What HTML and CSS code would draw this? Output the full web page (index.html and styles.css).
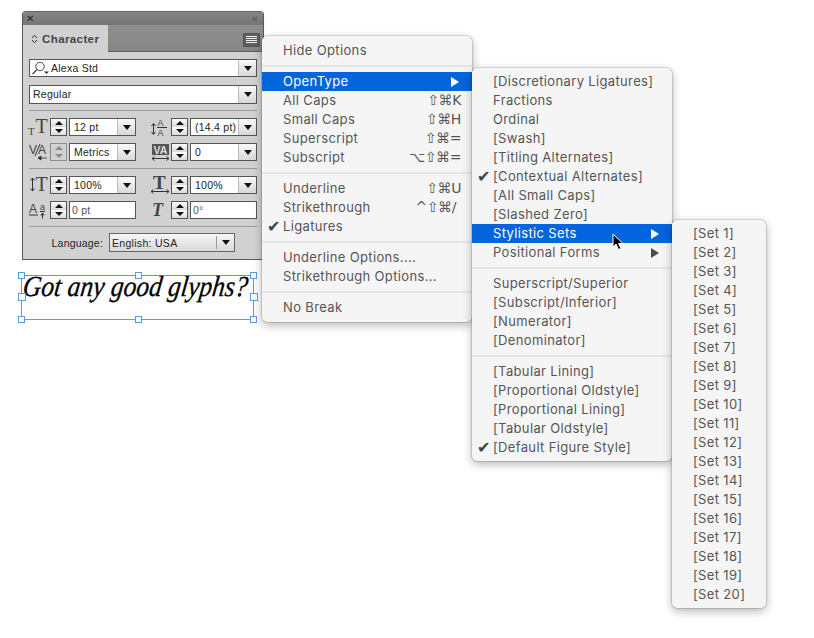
FILE: index.html
```html
<!DOCTYPE html>
<html lang="en">
<head>
<meta charset="utf-8">
<title>Character panel</title>
<link rel="stylesheet" href="styles.css">
</head>
<body>
<div class="canvas">
  <section class="panel">
    <div class="titlebar"><span class="close">✕</span><span class="collapse">‹‹</span></div>
    <div class="tabrow">
      <div class="tab"><svg class="updown" width="7" height="10" viewBox="0 0 7 10"><path d="M1 4 3.500 1.200 6 4M1 6l2.500 2.800L6 6" fill="none" stroke="#333" stroke-width="1"/></svg>Character</div>
      <div class="menubtn"><i></i><i></i><i></i><i></i></div>
    </div>
    <div class="body">
      <div class="combo wide">
        <svg class="search" width="20" height="14" viewBox="0 0 20 14"><circle cx="9" cy="5.500" r="4.200" fill="none" stroke="#444"/><path d="M6 8.500 1.500 13" stroke="#444" stroke-width="1.200"/><path d="M13 10.500h5l-2.500 2.500z" fill="#333"/></svg>
        <span class="val">Alexa Std</span><span class="arrowbtn"><b></b></span>
      </div>
      <div class="combo wide second"><span class="val pad">Regular</span><span class="arrowbtn"><b></b></span></div>
      <hr class="rule first">
      <div class="fields">
        <div class="field">
          <svg class="ico" width="21" height="18" viewBox="0 0 21 18"><text x="-1" y="16.500" class="g s11">T</text><text x="6.500" y="15" class="g s20">T</text></svg>
          <div class="stepper"><span class="up"></span><span class="dn"></span></div>
          <div class="combo"><span class="val">12 pt</span><span class="arrowbtn"><b></b></span></div>
        </div>
        <div class="field">
          <svg class="ico" width="21" height="18" viewBox="0 0 21 18"><text x="7.500" y="8" class="g2 s9">A</text><text x="7.500" y="17.500" class="g2 s9">A</text><path d="M3.500 6v10M1.500 8l2-2.500 2 2.500M1.500 14l2 2.500 2-2.500" fill="none" stroke="#333"/><path d="M7 9.500h10" stroke="#333"/></svg>
          <div class="stepper"><span class="up"></span><span class="dn"></span></div>
          <div class="combo"><span class="val">(14.4 pt)</span><span class="arrowbtn"><b></b></span></div>
        </div>
        <div class="field">
          <svg class="ico" width="21" height="18" viewBox="0 0 21 18"><text x="0" y="11" class="g2 s12">V</text><text x="9" y="11" class="g2 s12">A</text><path d="M6 13 11 1" stroke="#333"/><path d="M9 15h9M12 13l-3 2 3 2z" fill="#333" stroke="#333" stroke-width=".8"/></svg>
          <div class="stepper off"><span class="up"></span><span class="dn"></span></div>
          <div class="combo"><span class="val">Metrics</span><span class="arrowbtn"><b></b></span></div>
        </div>
        <div class="field">
          <svg class="ico" width="21" height="18" viewBox="0 0 21 18"><rect x="2" y="1" width="17" height="11" fill="#555"/><text x="3.500" y="10.500" class="g3">VA</text><path d="M2 15.500h17M4.500 13.500l-2.500 2 2.500 2M16.500 13.500l2.500 2-2.500 2" fill="none" stroke="#333"/></svg>
          <div class="stepper"><span class="up"></span><span class="dn"></span></div>
          <div class="combo"><span class="val">0</span><span class="arrowbtn"><b></b></span></div>
        </div>
      </div>
      <hr class="rule">
      <div class="fields">
        <div class="field">
          <svg class="ico" width="21" height="18" viewBox="0 0 21 18"><path d="M3.500 2v13M1.500 4.500l2-2.500 2 2.500M1.500 12.500l2 2.500 2-2.500" fill="none" stroke="#333"/><text x="6.500" y="15" class="g s20">T</text></svg>
          <div class="stepper"><span class="up"></span><span class="dn"></span></div>
          <div class="combo"><span class="val">100%</span><span class="arrowbtn"><b></b></span></div>
        </div>
        <div class="field">
          <svg class="ico" width="21" height="18" viewBox="0 0 21 18"><text x="3" y="13" class="g b s19">T</text><path d="M1 15.500h18M3.500 13.500l-2.500 2 2.500 2M16.500 13.500l2.500 2-2.500 2" fill="none" stroke="#333"/></svg>
          <div class="stepper"><span class="up"></span><span class="dn"></span></div>
          <div class="combo"><span class="val">100%</span><span class="arrowbtn"><b></b></span></div>
        </div>
        <div class="field">
          <svg class="ico" width="21" height="18" viewBox="0 0 21 18"><text x="0" y="12" class="g2 s12">A</text><text x="11" y="8.500" class="g2 s9">a</text><path d="M0 14h9M11 10.500h5" stroke="#333"/><path d="M13.500 17.500v-5M11.800 14.500l1.700-2.500 1.700 2.500" fill="none" stroke="#333"/></svg>
          <div class="stepper"><span class="up"></span><span class="dn"></span></div>
          <div class="input"><span class="val dim">0 pt</span></div>
        </div>
        <div class="field">
          <svg class="ico" width="21" height="18" viewBox="0 0 21 18"><text x="2" y="15" class="g it s18">T</text></svg>
          <div class="stepper"><span class="up"></span><span class="dn"></span></div>
          <div class="input"><span class="val dim">0°</span></div>
        </div>
      </div>
      <hr class="rule">
      <div class="lang">
        <span class="lang-label">Language:</span>
        <div class="lang-select"><span class="val">English: USA</span><span class="lang-arrow"><b></b></span></div>
      </div>
    </div>
  </section>

  <div class="frame">
    <span class="frame-text">Got any good glyphs?</span>
    <i class="h tl"></i><i class="h tc"></i><i class="h tr"></i>
    <i class="h ml big"></i><i class="h mr big"></i>
    <i class="h bl"></i><i class="h bc"></i><i class="h br"></i>
  </div>

  <div class="menu m1">
    <div class="row"><span>Hide Options</span></div>
    <div class="sep"></div>
    <div class="row hl"><span>OpenType</span><em class="tri"></em></div>
    <div class="row"><span>All Caps</span><kbd>⇧⌘K</kbd></div>
    <div class="row"><span>Small Caps</span><kbd>⇧⌘H</kbd></div>
    <div class="row"><span>Superscript</span><kbd>⇧⌘=</kbd></div>
    <div class="row"><span>Subscript</span><kbd>⌥⇧⌘=</kbd></div>
    <div class="sep"></div>
    <div class="row"><span>Underline</span><kbd>⇧⌘U</kbd></div>
    <div class="row"><span>Strikethrough</span><kbd class="k2">^⇧⌘/</kbd></div>
    <div class="row on"><span>Ligatures</span></div>
    <div class="sep"></div>
    <div class="row"><span>Underline Options....</span></div>
    <div class="row"><span>Strikethrough Options...</span></div>
    <div class="sep"></div>
    <div class="row"><span>No Break</span></div>
  </div>

  <div class="menu m2">
    <div class="row"><span>[Discretionary Ligatures]</span></div>
    <div class="row"><span>Fractions</span></div>
    <div class="row"><span>Ordinal</span></div>
    <div class="row"><span>[Swash]</span></div>
    <div class="row"><span>[Titling Alternates]</span></div>
    <div class="row on"><span>[Contextual Alternates]</span></div>
    <div class="row"><span>[All Small Caps]</span></div>
    <div class="row"><span>[Slashed Zero]</span></div>
    <div class="row hl"><span>Stylistic Sets</span><em class="tri"></em></div>
    <div class="row"><span>Positional Forms</span><em class="tri"></em></div>
    <div class="sep"></div>
    <div class="row"><span>Superscript/Superior</span></div>
    <div class="row"><span>[Subscript/Inferior]</span></div>
    <div class="row"><span>[Numerator]</span></div>
    <div class="row"><span>[Denominator]</span></div>
    <div class="sep"></div>
    <div class="row"><span>[Tabular Lining]</span></div>
    <div class="row"><span>[Proportional Oldstyle]</span></div>
    <div class="row"><span>[Proportional Lining]</span></div>
    <div class="row"><span>[Tabular Oldstyle]</span></div>
    <div class="row on"><span>[Default Figure Style]</span></div>
  </div>

  <div class="menu m3">
    <div class="row"><span>[Set 1]</span></div>
    <div class="row"><span>[Set 2]</span></div>
    <div class="row"><span>[Set 3]</span></div>
    <div class="row"><span>[Set 4]</span></div>
    <div class="row"><span>[Set 5]</span></div>
    <div class="row"><span>[Set 6]</span></div>
    <div class="row"><span>[Set 7]</span></div>
    <div class="row"><span>[Set 8]</span></div>
    <div class="row"><span>[Set 9]</span></div>
    <div class="row"><span>[Set 10]</span></div>
    <div class="row"><span>[Set 11]</span></div>
    <div class="row"><span>[Set 12]</span></div>
    <div class="row"><span>[Set 13]</span></div>
    <div class="row"><span>[Set 14]</span></div>
    <div class="row"><span>[Set 15]</span></div>
    <div class="row"><span>[Set 16]</span></div>
    <div class="row"><span>[Set 17]</span></div>
    <div class="row"><span>[Set 18]</span></div>
    <div class="row"><span>[Set 19]</span></div>
    <div class="row"><span>[Set 20]</span></div>
  </div>

  <svg class="cursor" width="12" height="18" viewBox="0 0 12 18"><path d="M1 1v13l3-3 2.500 5.500 2.500-1L6.500 10.500H11z" fill="#000" stroke="#fff" stroke-width="1"/></svg>
</div>
</body>
</html>
```

FILE: styles.css
```css
* { box-sizing: border-box; }
html, body { margin: 0; padding: 0; background: #fff; }
.canvas { position: relative; width: 814px; height: 638px; overflow: hidden; font-family: "Liberation Sans", Arial, sans-serif; }

/* Character panel */
.panel { position: absolute; left: 22px; top: 11px; width: 242px; height: 249px; background: #d1d1d1; border: 1px solid #5c5c5c; border-top-color: #666; border-radius: 4px 4px 0 0; box-shadow: 0 0 1px rgba(0,0,0,.2); color: #222; }
.titlebar { height: 13px; background: linear-gradient(#858585, #757575); display: flex; justify-content: space-between; align-items: center; padding: 0 6px 0 3px; border-radius: 3px 3px 0 0; color: #222; font-size: 10px; line-height: 13px; }
.collapse { color: #4f4f4f; font-size: 11px; letter-spacing: -1px; }
.tabrow { height: 27px; background: linear-gradient(#8f8f8f, #868686); display: flex; justify-content: space-between; align-items: center; padding-right: 3px; border-bottom: 1px solid #5f5f5f; }
.tab { width: 85px; height: 27px; margin-bottom: -1px; background: #d1d1d1; display: flex; align-items: center; gap: 4px; padding-left: 8px; font-size: 11.500px; font-weight: bold; color: #444; letter-spacing: .4px; align-self: flex-start; }
.menubtn { width: 17px; height: 14px; background: #5e5e5e; border: 1px solid #555; border-radius: 1px; display: flex; flex-direction: column; justify-content: center; gap: 1px; padding: 0 2px; margin-top: 3px; }
.menubtn i { display: block; height: 1px; background: #f2f2f2; }
.body { padding: 7px 6px 0; }
.combo, .input { height: 18px; border: 1px solid #555; background: #fff; display: flex; align-items: center; font-size: 10.500px; color: #222; letter-spacing: .25px; min-width: 0; flex: 1; }
.wide { width: 228px; flex: none; height: 18px; }
.second { margin-top: 8px; height: 19px; }
.second .val { padding-bottom: 1px; }
.search { flex: none; margin-left: 1px; }
.val { flex: 1; padding-left: 4px; white-space: nowrap; overflow: hidden; line-height: 14px; }
.wide .val { padding-left: 0; }
.wide .val.pad { padding-left: 3px; }
.dim { color: #555; padding-left: 2px; }
.arrowbtn { flex: none; width: 18px; height: 100%; background: linear-gradient(#fafafa, #d8d8d8); border-left: 1px solid #bbb; display: flex; align-items: center; justify-content: center; }
.arrowbtn b, .lang-arrow b { display: block; width: 0; height: 0; border: 4.500px solid transparent; border-top: 5px solid #111; border-bottom: 0; }
.rule { border: 0; height: 1px; background: #9a9a9a; margin: 0; }
.rule.first { margin-top: 6px; }
.fields { display: grid; grid-template-columns: 107px 107px; column-gap: 14px; row-gap: 7px; padding: 7px 0; }
.field { display: flex; align-items: center; height: 18px; }
.ico { flex: none; width: 21px; height: 18px; overflow: visible; }
.g, .g2 { fill: #444; font-family: "Liberation Serif", serif; }
.g2 { font-family: "Liberation Sans", sans-serif; }
.g3 { fill: #ddd; font-family: "Liberation Sans", sans-serif; font-size: 10.500px; font-weight: bold; }
.b { font-weight: bold; }
.it { font-style: italic; font-weight: bold; }
.s9 { font-size: 9px; } .s11 { font-size: 11px; } .s12 { font-size: 12px; } .s18 { font-size: 18px; } .s19 { font-size: 19px; } .s20 { font-size: 20px; }
.stepper { flex: none; width: 17px; height: 18px; margin-right: 2px; border: 1px solid #555; background: linear-gradient(#fafafa 0, #dcdcdc 47%, #777 47%, #777 53%, #fafafa 53%, #dcdcdc 100%); display: flex; flex-direction: column; align-items: center; justify-content: center; gap: 4px; }
.stepper span { display: block; width: 0; height: 0; border: 4px solid transparent; }
.stepper .up { border-top: 0; border-bottom: 4px solid #111; }
.stepper .dn { border-bottom: 0; border-top: 4px solid #111; }
.stepper.off { border-color: #8f8f8f; background: linear-gradient(#d1d1d1 47%, #999 47%, #999 53%, #d1d1d1 53%); }
.stepper.off .up { border-bottom-color: #888; }
.stepper.off .dn { border-top-color: #888; }
.lang { display: flex; align-items: center; justify-content: flex-end; gap: 6px; padding: 6px 22px 0 0; }
.lang-label { font-size: 10.500px; color: #222; letter-spacing: .2px; }
.lang-select { width: 126px; height: 19px; border: 1px solid #666; background: linear-gradient(#f6f6f6, #d9d9d9); display: flex; align-items: center; font-size: 10.500px; letter-spacing: .3px; color: #222; }
.lang-select .val { padding-left: 2px; }
.lang-arrow { flex: none; width: 18px; height: 13px; border-left: 1px solid #999; display: flex; align-items: center; justify-content: center; }

/* Text frame */
.frame { position: absolute; left: 21px; top: 275px; width: 233px; height: 45px; border: 1px solid #5b9ae8; }
.frame-text { display: inline-block; font-family: "Liberation Serif", serif; font-style: italic; font-size: 29px; line-height: 20px; color: #000; white-space: nowrap; -webkit-text-stroke: .3px #000; transform-origin: 0 100%; transform: scaleX(.88) skewX(-8deg); }
.h { position: absolute; width: 7px; height: 7px; background: #fff; border: 1px solid #5b9ae8; }
.h.big { width: 8px; height: 8px; }
.tl { left: -4px; top: -4px; } .tc { left: 113px; top: -4px; } .tr { right: -4px; top: -4px; }
.ml { left: -4px; top: 17px; } .mr { right: -5px; top: 17px; }
.bl { left: -4px; bottom: -4px; } .bc { left: 113px; bottom: -4px; } .br { right: -4px; bottom: -4px; }

/* Menus */
.menu { position: absolute; background: #f5f5f5; border-radius: 5px; box-shadow: 0 0 0 .5px rgba(0,0,0,.25), 0 3px 10px rgba(0,0,0,.3); padding: 5px 0 5px; font-family: "Inter", "Liberation Sans", sans-serif; font-size: 13px; color: #555; letter-spacing: .35px; }
.m1 { left: 262px; top: 36px; width: 210px; height: 286px; }
.m2 { left: 472px; top: 68px; width: 200px; height: 393px; padding-top: 4px; }
.m3 { left: 672px; top: 220px; width: 94px; height: 388px; padding-top: 4px; }
.row { position: relative; height: 19px; line-height: 19px; padding: 0 10px 0 21px; display: flex; justify-content: space-between; align-items: center; white-space: nowrap; }
.hl { background: #0364dd; color: #fff; }
.sep { height: 12px; display: flex; align-items: center; }
.sep::before { content: ""; display: block; width: 100%; height: 2px; background: #e6e6e6; }
kbd { font-family: "DejaVu Sans", sans-serif; font-size: 14px; letter-spacing: -.4px; color: #555; margin-right: 1px; }
.k2 { margin-right: 6px; }
.tri { display: block; width: 0; height: 0; border: 5px solid transparent; border-left: 8px solid #4a4a4a; border-right: 0; margin-right: 3px; }
.hl .tri { border-left-color: #fff; }
.on::before { content: "✔"; position: absolute; left: 5px; top: 0; font-family: "DejaVu Sans", sans-serif; font-size: 16px; color: #444; }
.cursor { position: absolute; left: 612px; top: 233px; }
```
